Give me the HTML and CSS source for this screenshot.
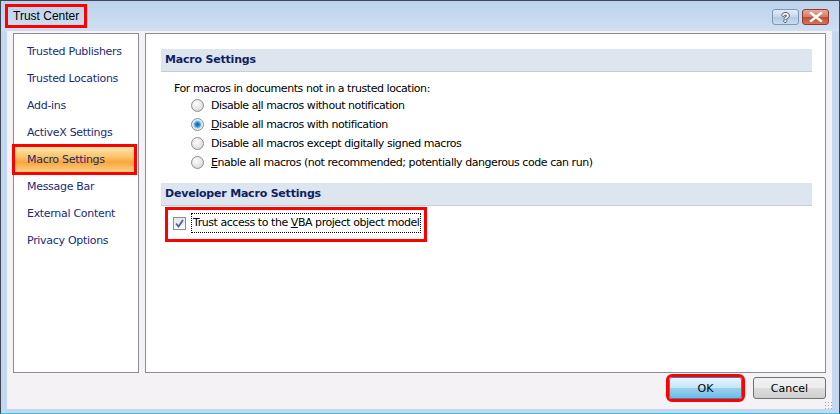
FILE: index.html
```html
<!DOCTYPE html>
<html>
<head>
    <link rel="stylesheet" href="styles.css">
    <title>Trust Center</title>
</head>
<body>
    <div class="window">
        <div class="titlebar">
            <span class="title">Trust Center</span>
            <div class="caption-buttons">
                <span class="cap-btn cap-help">?</span>
                <span class="cap-btn cap-close">
                    <svg width="14" height="10" viewBox="0 0 14 10"><path d="M2 1 L12 9 M12 1 L2 9" stroke="#fff" stroke-width="2.4" stroke-linecap="square"/></svg>
                </span>
            </div>
        </div>
        <div class="content">
            <div class="main">
                <div class="nav">
                    <div class="nav-item">Trusted Publishers</div>
                    <div class="nav-item">Trusted Locations</div>
                    <div class="nav-item">Add-ins</div>
                    <div class="nav-item">ActiveX Settings</div>
                    <div class="nav-item selected">Macro Settings</div>
                    <div class="nav-item">Message Bar</div>
                    <div class="nav-item">External Content</div>
                    <div class="nav-item">Privacy Options</div>
                </div>
                <div class="panel">
                    <div class="section-head">Macro Settings</div>
                    <div class="intro">For macros in documents not in a trusted location:</div>
                    <div class="radio-list">
                        <div class="radio-row"><span class="radio"></span>Disable a<u>l</u>l macros without notification</div>
                        <div class="radio-row"><span class="radio checked"></span><u>D</u>isable all macros with notification</div>
                        <div class="radio-row"><span class="radio"></span>Disable all macros except di<u>g</u>itally signed macros</div>
                        <div class="radio-row"><span class="radio"></span><u>E</u>nable all macros (not recommended; potentially dangerous code can run)</div>
                    </div>
                    <div class="section-head">Developer Macro Settings</div>
                    <div class="check-wrap">
                        <span class="checkbox">
                            <svg width="11" height="11" viewBox="0 0 11 11"><path d="M2 5.5 L4.5 8.5 L9 2" fill="none" stroke="#4a63a0" stroke-width="1.8"/></svg>
                        </span>
                        <span class="focus">Trust access to the <u>V</u>BA project object model</span>
                    </div>
                </div>
            </div>
            <div class="footer">
                <button class="btn btn-ok">OK</button>
                <button class="btn">Cancel</button>
                <span class="grip"></span>
            </div>
        </div>
    </div>
</body>
</html>
```
FILE: styles.css
```css
body {
    margin: 0;
    font-family: "Liberation Sans", Arial, sans-serif;
    font-size: 12px;
}
.window {
    width: 840px;
    height: 414px;
    box-sizing: border-box;
    display: flex;
    flex-direction: column;
    border: 1px solid #3d4756;
    border-bottom: 1px solid #33c6e6;
    padding: 0 7px 4px 6px;
    background: linear-gradient(#bcd2ec, #d0dff1 30px, #c3d7ef 31px);
}
.titlebar {
    height: 30px;
    display: flex;
    align-items: center;
    justify-content: space-between;
}
.title {
    margin-left: -2px;
    padding: 3px 5px 3px 5px;
    border: 3px solid #f00;
    color: #000;
    font-size: 12px;
    line-height: 12px;
}
.caption-buttons {
    display: flex;
    gap: 3px;
    margin-top: 2px;
    margin-right: 3px;
}
.cap-btn {
    width: 25px;
    height: 14px;
    border-radius: 3px;
    display: flex;
    align-items: center;
    justify-content: center;
}
.cap-help {
    border: 1px solid #7f97b6;
    background: linear-gradient(#e3edf8, #c4d6ec 50%, #b2c8e4 51%, #cddcef);
    color: #fff;
    font-weight: bold;
    font-size: 13px;
    text-shadow: 1px 0 0 #4a5d7a, -1px 0 0 #4a5d7a, 0 1px 0 #4a5d7a, 0 -1px 0 #4a5d7a;
}
.cap-close {
    border: 1px solid #8a3d33;
    background: linear-gradient(#e9a99a, #d47a63 50%, #c04a30 51%, #d8745a);
}
.content {
    flex: 1;
    background: #f5f2f5;
    padding: 2px 6px 0 6px;
    display: flex;
    flex-direction: column;
}
.main {
    height: 340px;
    display: flex;
    gap: 6px;
}
.nav {
    width: 124px;
    border: 1px solid #8c8d96;
    background: #fff;
    padding-top: 4px;
}
.nav-item {
    height: 27px;
    line-height: 27px;
    margin-right: 3px;
    padding-left: 13px;
    color: #1a2b73;
    font-family: "DejaVu Sans", sans-serif;
    font-size: 11px;
    letter-spacing: -0.3px;
}
.nav-item.selected {
    background: linear-gradient(#fde9b4, #fcc46a 40%, #f9a53c 60%, #fcd48d);
    outline: 3px solid #f00;
    outline-offset: -1px;
}
.panel {
    flex: 1;
    border: 1px solid #8c8d96;
    background: #fff;
    padding: 15px 13px 0 15px;
    color: #000;
    font-family: "DejaVu Sans", sans-serif;
    font-size: 11px;
    letter-spacing: -0.45px;
}
.section-head {
    height: 22px;
    line-height: 22px;
    background: #dde5ef;
    border-bottom: 1px solid #c8cdd4;
    padding-left: 4px;
    color: #0f1f63;
    font-weight: bold;
    font-size: 11px;
    letter-spacing: -0.2px;
}
.intro {
    margin-top: 9px;
    padding-left: 13px;
    line-height: 15px;
}
.radio-list {
    padding-left: 30px;
    margin-bottom: 11px;
}
.radio-row {
    height: 19px;
    display: flex;
    align-items: center;
}
.radio {
    width: 11px;
    height: 11px;
    border-radius: 50%;
    border: 1px solid #8e8f91;
    background: radial-gradient(circle at 40% 35%, #ffffff, #e2e2e2 60%, #c8c8c8);
    margin-right: 7px;
}
.radio.checked {
    background: radial-gradient(circle at 50% 50%, #0f5e9c 0, #2a8ad4 2px, #59b4ec 3px, #b8e0f8 4px, #f1f1f1 5px, #d6d6d6);
}
.check-wrap {
    box-sizing: border-box;
    margin: 1px 0 0 4px;
    width: 262px;
    height: 35px;
    border: 3px solid #f00;
    display: flex;
    align-items: center;
    padding: 0 0 3px 5px;
    white-space: nowrap;
}
.checkbox {
    width: 11px;
    height: 11px;
    border: 1px solid #8e8f91;
    background: linear-gradient(#e6e6e6, #fbfbfb);
    display: flex;
    align-items: center;
    justify-content: center;
    margin-right: 5px;
}
.focus {
    border: 1px dotted #000;
    padding: 2px 1px 3px 1px;
}
.footer {
    flex: 1;
    display: flex;
    justify-content: flex-end;
    align-items: flex-start;
    gap: 11px;
    padding-top: 4px;
    position: relative;
}
.btn {
    width: 73px;
    height: 22px;
    border: 1px solid #707070;
    border-radius: 3px;
    background: linear-gradient(#f2f2f2, #ebebeb 50%, #dddddd 51%, #cfcfcf);
    font-family: "DejaVu Sans", sans-serif;
    font-size: 11px;
    font-weight: normal;
    color: #000;
    padding: 0;
}
.btn-ok {
    border: 1px solid #3c7fb1;
    background: linear-gradient(#e5f4fc, #c4e5f6 50%, #98d1ef 51%, #6cbde8);
    outline: 3px solid #f00;
    outline-offset: 0;
}
.grip {
    position: absolute;
    right: -6px;
    bottom: 0;
    width: 8px;
    height: 8px;
    background: radial-gradient(circle, #9aa3ad 1px, transparent 1px) 0 0 / 3px 3px;
}
```
